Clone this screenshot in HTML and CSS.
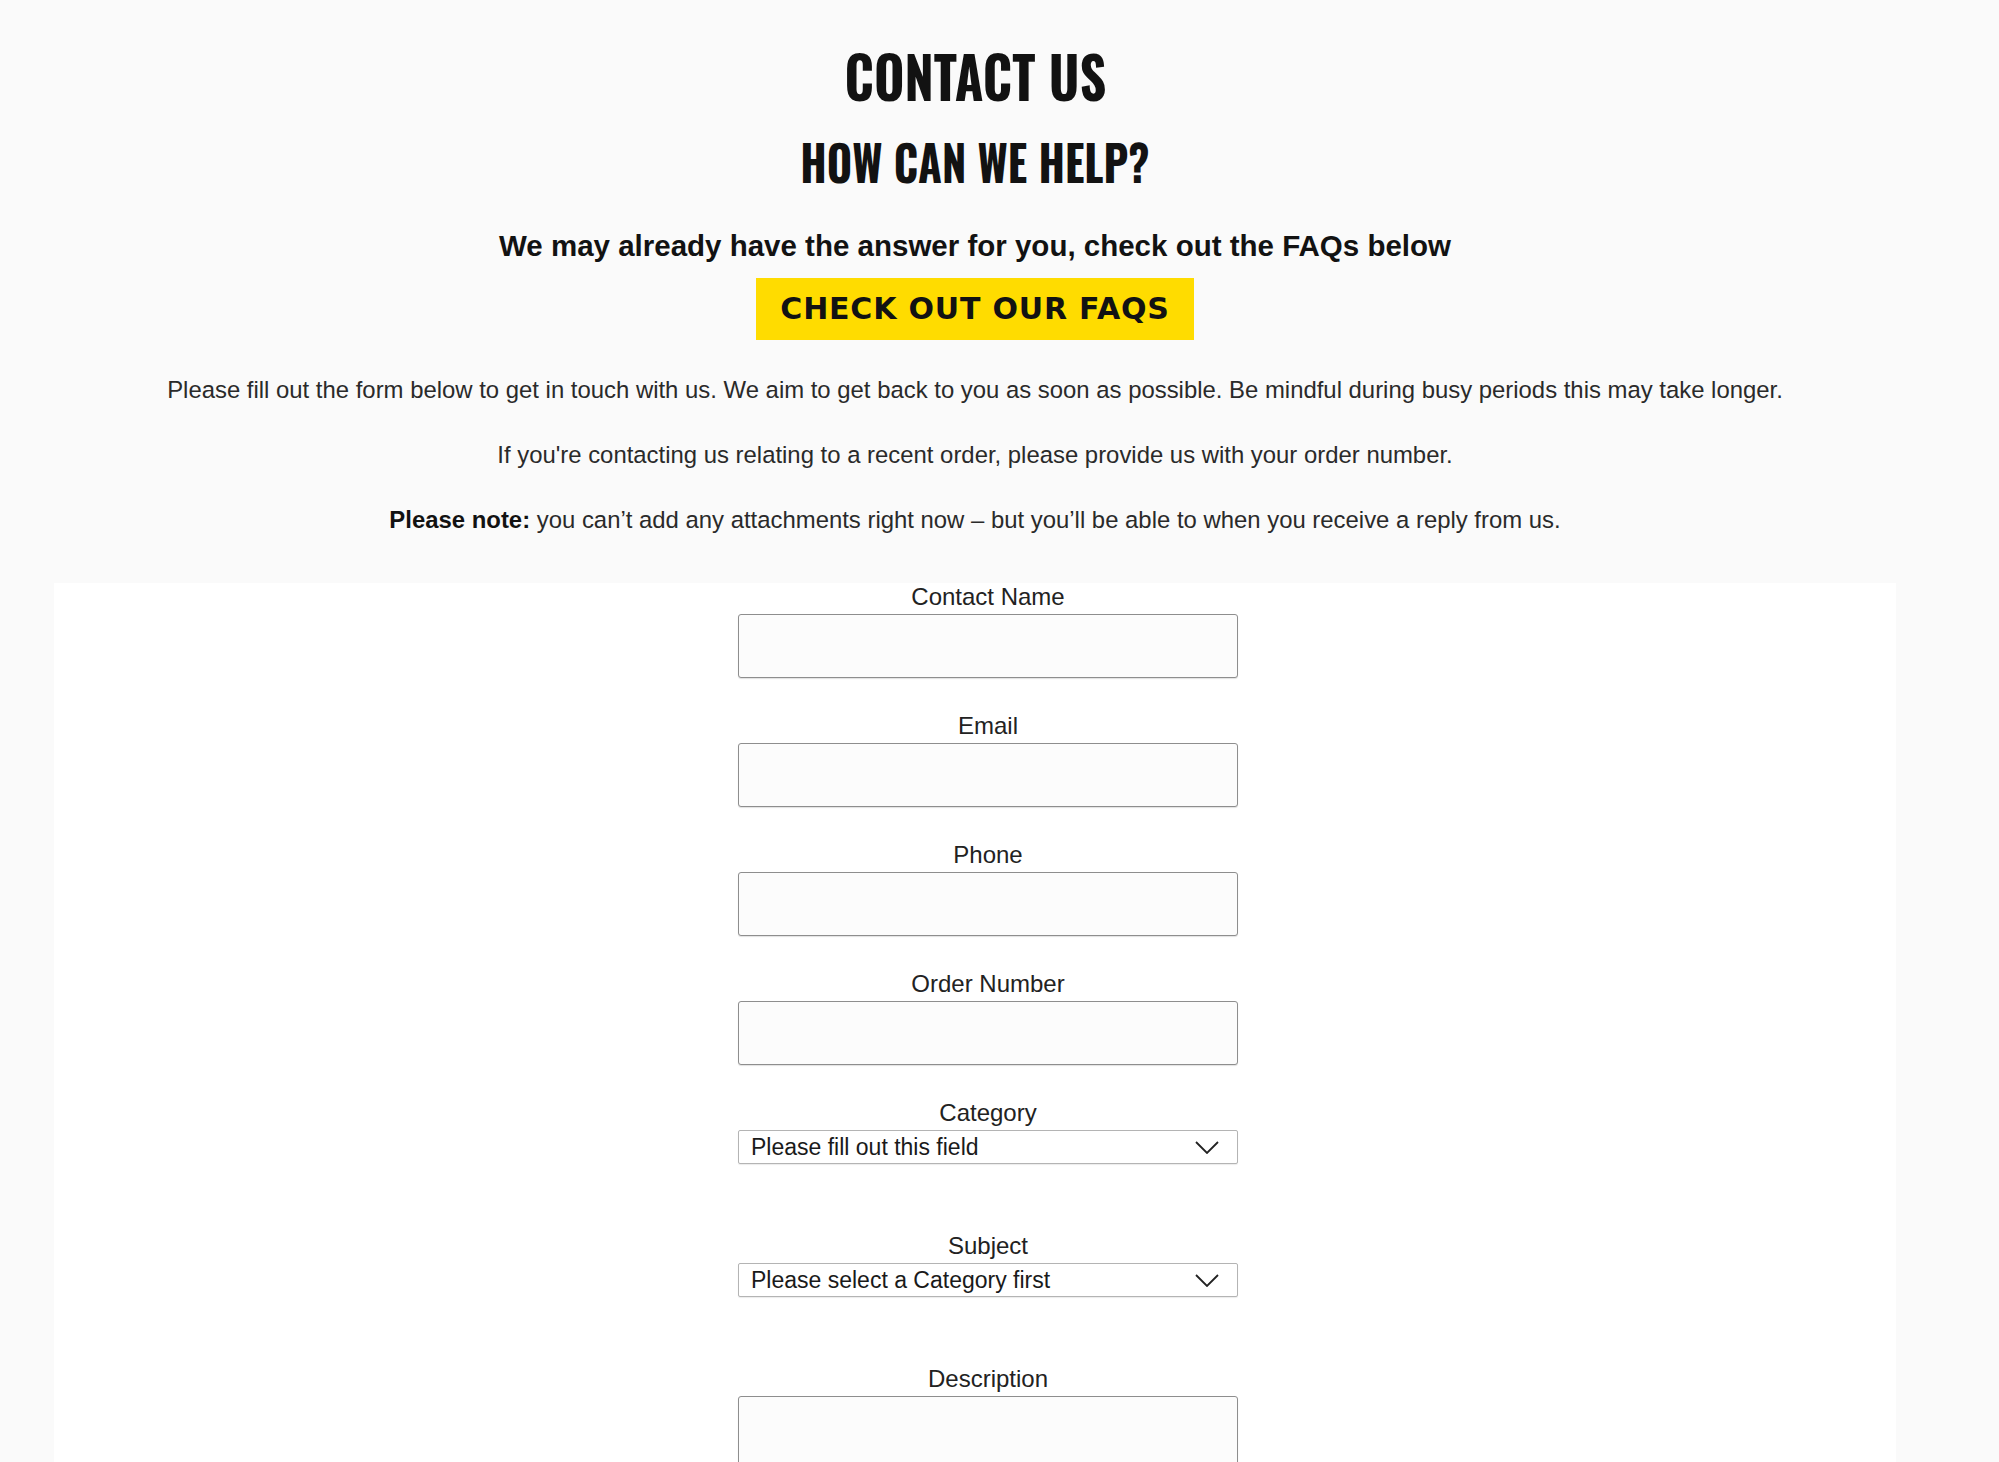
FILE: index.html
```html
<!DOCTYPE html>
<html lang="en">
<head>
  <meta charset="UTF-8" />
  <title>Contact Us</title>
  <link rel="stylesheet" href="styles.css">
</head>
<body>
  <main class="page">
    <header class="intro">
      <h1 class="title"><span>CONTACT US</span></h1>
      <h2 class="subtitle"><span>HOW CAN WE HELP?</span></h2>
      <p class="lead">We may already have the answer for you, check out the FAQs below</p>
      <a class="faq-button" href="#faqs">CHECK OUT OUR FAQS</a>
      <p class="note">Please fill out the form below to get in touch with us. We aim to get back to you as soon as possible. Be mindful during busy periods this may take longer.</p>
      <p class="note">If you're contacting us relating to a recent order, please provide us with your order number.</p>
      <p class="note"><strong>Please note:</strong> you can’t add any attachments right now – but you’ll be able to when you receive a reply from us.</p>
    </header>

    <section class="form-panel">
      <form class="contact-form">
        <div class="field">
          <label for="name">Contact Name</label>
          <input id="name" type="text" />
        </div>
        <div class="field">
          <label for="email">Email</label>
          <input id="email" type="email" />
        </div>
        <div class="field">
          <label for="phone">Phone</label>
          <input id="phone" type="tel" />
        </div>
        <div class="field">
          <label for="order">Order Number</label>
          <input id="order" type="text" />
        </div>
        <div class="field field-select">
          <label for="category">Category</label>
          <div class="select-wrap">
            <select id="category">
              <option>Please fill out this field</option>
            </select>
            <svg class="chevron" viewBox="0 0 24 13" width="24" height="13"><path d="M1 1l11 11L23 1" fill="none" stroke="#222" stroke-width="1.8"/></svg>
          </div>
        </div>
        <div class="field field-select">
          <label for="subject">Subject</label>
          <div class="select-wrap">
            <select id="subject">
              <option>Please select a Category first</option>
            </select>
            <svg class="chevron" viewBox="0 0 24 13" width="24" height="13"><path d="M1 1l11 11L23 1" fill="none" stroke="#222" stroke-width="1.8"/></svg>
          </div>
        </div>
        <div class="field">
          <label for="description">Description</label>
          <textarea id="description"></textarea>
        </div>
      </form>
    </section>
  </main>
</body>
</html>
```

FILE: styles.css
```css
body {
  margin: 0;
  background-color: #fafafa;
  color: #121212;
  font-family: "Liberation Sans", Arial, sans-serif;
}

.page {
  width: 1950px;
  padding-top: 46px;
}

.intro {
  text-align: center;
}

.title, .subtitle {
  margin: 0;
  font-family: "Oswald", "Liberation Sans Narrow", "DejaVu Sans Condensed", sans-serif;
  font-weight: 700;
  line-height: 1;
}
.title span, .subtitle span {
  display: inline-block;
}
.title {
  font-size: 58px;
}
.title span {
  transform: scaleX(0.9);
}
.subtitle {
  margin-top: 33px;
  font-size: 49px;
}
.subtitle span {
  transform: scaleX(0.887);
}

.lead {
  margin: 43px 0 0;
  font-size: 29.5px;
  font-weight: 700;
  line-height: 34px;
}

.faq-button {
  display: block;
  width: fit-content;
  height: 62px;
  margin: 15px auto 0;
  padding: 0 24px;
  background-color: #ffdc00;
  color: #121212;
  font-family: "DejaVu Sans", sans-serif;
  font-weight: 700;
  font-size: 30px;
  letter-spacing: 0.8px;
  line-height: 62px;
  text-decoration: none;
}

.note {
  margin: 35px 0 0;
  font-size: 23.9px;
  line-height: 30px;
  color: #2a2a2a;
}
.note strong {
  color: #121212;
}

/* form area */
.form-panel {
  margin: 48px 54px 0;
  padding: 1px 0 60px 26px;
  background-color: #fff;
}

.contact-form {
  width: 500px;
  margin: 0 auto;
}

.field {
  display: flex;
  flex-direction: column;
  margin-bottom: 35px;
}
.field-select {
  margin-bottom: 69px;
}

.field label {
  text-align: center;
  font-size: 24px;
  line-height: 26px;
  color: #222;
  margin-bottom: 4px;
}

.field input, .field textarea {
  box-sizing: border-box;
  width: 500px;
  height: 64px;
  border: 1px solid #8e8e8e;
  border-radius: 3px;
  background-color: #fcfcfc;
  box-shadow: 0 1px 1px rgba(0, 0, 0, 0.12);
}
.field textarea {
  height: 170px;
  resize: none;
}

.select-wrap {
  position: relative;
}
.select-wrap select {
  box-sizing: border-box;
  width: 500px;
  height: 34px;
  padding: 0 12px;
  border: 1px solid #b4b4b4;
  border-radius: 2px;
  background-color: #fff;
  box-shadow: 0 1px 1px rgba(0, 0, 0, 0.08);
  appearance: none;
  font-family: "Liberation Sans", Arial, sans-serif;
  font-size: 23px;
  color: #1a1a1a;
}
.chevron {
  position: absolute;
  right: 19px;
  top: 11px;
  pointer-events: none;
}
```
